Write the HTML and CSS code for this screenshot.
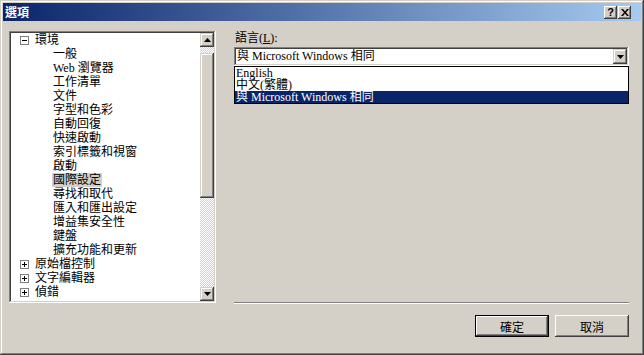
FILE: index.html
```html
<!DOCTYPE html>
<html lang="zh-Hant">
<head>
    <meta charset="UTF-8">
    <title>選項</title>
    <link rel="stylesheet" href="styles.css">
</head>
<body>
    <div class="window">
        <div class="titlebar">
            <span class="title">選項</span>
            <div class="caption-buttons">
                <span class="cap-btn help">?</span>
                <span class="cap-btn">
                    <svg width="8" height="7" viewBox="0 0 8 7"><path d="M0 0h2l2 2.5L6 0h2L5 3.5 8 7H6L4 4.5 2 7H0l3-3.5z" fill="#000"/></svg>
                </span>
            </div>
        </div>

        <div class="client">
            <div class="main">
                <div class="tree">
                    <ul class="tree-list">
                        <li class="tree-row root"><span class="expander minus"></span>環境</li>
                        <li class="tree-row child"><span class="label">一般</span></li>
                        <li class="tree-row child"><span class="label">Web 瀏覽器</span></li>
                        <li class="tree-row child"><span class="label">工作清單</span></li>
                        <li class="tree-row child"><span class="label">文件</span></li>
                        <li class="tree-row child"><span class="label">字型和色彩</span></li>
                        <li class="tree-row child"><span class="label">自動回復</span></li>
                        <li class="tree-row child"><span class="label">快速啟動</span></li>
                        <li class="tree-row child"><span class="label">索引標籤和視窗</span></li>
                        <li class="tree-row child"><span class="label">啟動</span></li>
                        <li class="tree-row child"><span class="label selected">國際設定</span></li>
                        <li class="tree-row child"><span class="label">尋找和取代</span></li>
                        <li class="tree-row child"><span class="label">匯入和匯出設定</span></li>
                        <li class="tree-row child"><span class="label">增益集安全性</span></li>
                        <li class="tree-row child"><span class="label">鍵盤</span></li>
                        <li class="tree-row child"><span class="label">擴充功能和更新</span></li>
                        <li class="tree-row root"><span class="expander plus"></span>原始檔控制</li>
                        <li class="tree-row root"><span class="expander plus"></span>文字編輯器</li>
                        <li class="tree-row root"><span class="expander plus"></span>偵錯</li>
                        <li class="tree-row root"><span class="expander plus"></span>IntelliTrace</li>
                    </ul>
                    <div class="scrollbar">
                        <span class="sb-btn">
                            <svg width="7" height="4" viewBox="0 0 7 4"><path d="M3.5 0L7 4H0z" fill="#000"/></svg>
                        </span>
                        <div class="sb-track">
                            <div class="sb-thumb"></div>
                        </div>
                        <span class="sb-btn">
                            <svg width="7" height="4" viewBox="0 0 7 4"><path d="M0 0h7L3.5 4z" fill="#000"/></svg>
                        </span>
                    </div>
                </div>

                <div class="pane">
                    <div class="field-label">語言(<u>L</u>):</div>
                    <div class="combo">
                        <span class="combo-value">與 Microsoft Windows 相同</span>
                        <span class="combo-btn">
                            <svg width="7" height="4" viewBox="0 0 7 4"><path d="M0 0h7L3.5 4z" fill="#000"/></svg>
                        </span>
                    </div>
                    <ul class="dropdown">
                        <li>English</li>
                        <li>中文(繁體)</li>
                        <li class="selected">與 Microsoft Windows 相同</li>
                    </ul>
                    <div class="separator"></div>
                </div>
            </div>

            <div class="footer">
                <button class="btn default">確定</button>
                <button class="btn">取消</button>
            </div>
        </div>
    </div>
</body>
</html>
```

FILE: styles.css
```css
* {
    box-sizing: border-box;
}

body {
    margin: 0;
    background-color: #d4d0c8;
    font-family: "Liberation Serif", "Noto Sans CJK TC", serif;
    font-size: 12px;
    line-height: 14px;
    color: #000;
}

.window {
    width: 644px;
    height: 355px;
    padding: 3px;
    background-color: #d4d0c8;
    box-shadow: inset -1px -1px #404040, inset 1px 1px #d4d0c8,
                inset -2px -2px #808080, inset 2px 2px #fff;
    display: flex;
    flex-direction: column;
}

.titlebar {
    height: 18px;
    flex: none;
    background: linear-gradient(to right, #0a246a, #a6caf0);
    display: flex;
    align-items: center;
    padding: 0 10px 0 2px;
}

.title {
    flex: 1;
    color: #fff;
    font-family: "Noto Sans CJK TC", sans-serif;
    font-weight: bold;
    font-size: 12px;
    line-height: 18px;
}

.caption-buttons {
    display: flex;
    gap: 1px;
}

.cap-btn {
    width: 13px;
    height: 13px;
    background-color: #d4d0c8;
    box-shadow: inset -1px -1px #404040, inset 1px 1px #fff,
                inset -2px -2px #808080, inset 2px 2px #d4d0c8;
    display: flex;
    align-items: center;
    justify-content: center;
}

.cap-btn.help {
    font-family: "Liberation Sans", sans-serif;
    font-weight: bold;
    font-size: 11px;
    line-height: 13px;
}

.client {
    flex: 1;
    padding: 10px 12px 0 6px;
}

.main {
    display: flex;
    gap: 18px;
}

/* tree view */
.tree {
    width: 207px;
    height: 272px;
    padding: 2px;
    background-color: #fff;
    box-shadow: inset -1px -1px #fff, inset 1px 1px #808080,
                inset -2px -2px #d4d0c8, inset 2px 2px #404040;
    display: flex;
}

.tree-list {
    flex: 1;
    margin: 0;
    padding: 0;
    list-style: none;
    overflow: hidden;
}

.tree-row {
    height: 14px;
    display: flex;
    align-items: center;
    white-space: nowrap;
}

.tree-row.root {
    padding-left: 9px;
}

.tree-row.child {
    padding-left: 41px;
}

.label {
    padding: 0 1px;
}

.label.selected {
    background-color: #d4d0c8;
}

.expander {
    position: relative;
    width: 9px;
    height: 9px;
    margin-right: 6px;
    border: 1px solid #808080;
    background-color: #fff;
    flex: none;
}

.expander::before {
    content: "";
    position: absolute;
    left: 1px;
    top: 3px;
    width: 5px;
    height: 1px;
    background-color: #000;
}

.expander.plus::after {
    content: "";
    position: absolute;
    left: 3px;
    top: 1px;
    width: 1px;
    height: 5px;
    background-color: #000;
}

.scrollbar {
    width: 14px;
    display: flex;
    flex-direction: column;
}

.sb-btn {
    height: 14px;
    flex: none;
    background-color: #d4d0c8;
    box-shadow: inset -1px -1px #404040, inset 1px 1px #d4d0c8,
                inset -2px -2px #808080, inset 2px 2px #fff;
    display: flex;
    align-items: center;
    justify-content: center;
}

.sb-track {
    flex: 1;
    background: repeating-conic-gradient(#fff 0 25%, #d4d0c8 0 50%) 0 0 / 2px 2px;
}

.sb-thumb {
    margin-top: 6px;
    height: 145px;
    background-color: #d4d0c8;
    box-shadow: inset -1px -1px #404040, inset 1px 1px #d4d0c8,
                inset -2px -2px #808080, inset 2px 2px #fff;
}

/* right pane */
.pane {
    width: 395px;
    height: 273px;
    display: flex;
    flex-direction: column;
}

.field-label {
    height: 14px;
    margin-bottom: 2px;
    padding-left: 1px;
}

.combo {
    height: 19px;
    padding: 2px;
    background-color: #fff;
    box-shadow: inset -1px -1px #fff, inset 1px 1px #808080,
                inset -2px -2px #d4d0c8, inset 2px 2px #404040;
    display: flex;
}

.combo-value {
    flex: 1;
    padding-left: 1px;
    line-height: 15px;
    white-space: nowrap;
}

.combo-btn {
    width: 14px;
    background-color: #d4d0c8;
    box-shadow: inset -1px -1px #404040, inset 1px 1px #d4d0c8,
                inset -2px -2px #808080, inset 2px 2px #fff;
    display: flex;
    align-items: center;
    justify-content: center;
}

.dropdown {
    margin: 0;
    padding: 0;
    list-style: none;
    border: 1px solid #000;
    background-color: #fff;
}

.dropdown li {
    height: 12px;
    line-height: 12px;
    padding-left: 1px;
    white-space: nowrap;
}

.dropdown li.selected {
    background-color: #0a246a;
    color: #fff;
}

.separator {
    margin-top: auto;
    height: 2px;
    border-top: 1px solid #808080;
    border-bottom: 1px solid #fff;
}

/* buttons */
.footer {
    display: flex;
    justify-content: flex-end;
    gap: 6px;
    padding-top: 11px;
}

.btn {
    width: 74px;
    height: 22px;
    padding: 0;
    border: none;
    background-color: #d4d0c8;
    font-family: "Noto Sans CJK TC", sans-serif;
    font-size: 12px;
    color: #000;
    box-shadow: inset -1px -1px #404040, inset 1px 1px #fff,
                inset -2px -2px #808080, inset 2px 2px #d4d0c8;
}

.btn.default {
    border: 1px solid #000;
}
```
